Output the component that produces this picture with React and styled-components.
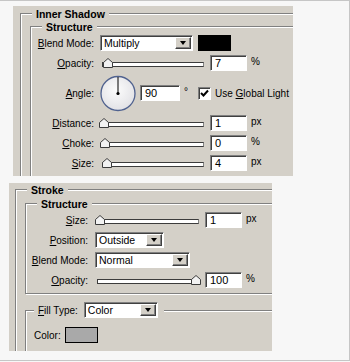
import React from "react";
import styled, { createGlobalStyle } from "styled-components";

const GlobalStyle = createGlobalStyle`
  * { box-sizing: border-box; }
  body {
    margin: 0;
    background: #f7f7f7;
    font-family: "Liberation Sans", Arial, sans-serif;
  }
`;

const Frame = styled.div`
  width: 350px;
  height: 361px;
  background: #f7f7f7;
  border: 1px solid #c6c6c6;
  border-left: none;
  display: flex;
  flex-direction: column;
  gap: 7px;
  padding-top: ${(p) => p.$top}px;
  font-size: 10px;
  color: #000;
`;

const Panel = styled.div`
  width: ${(p) => p.$w}px;
  height: ${(p) => p.$h}px;
  margin-left: ${(p) => p.$x}px;
  padding-top: ${(p) => p.$pt}px;
  padding-left: ${(p) => p.$pl}px;
  background: #d4d0c8;
  overflow: hidden;
  flex-shrink: 0;
`;

// etched frame like a windows group box
const Group = styled.div`
  display: flex;
  flex-direction: column;
  align-items: flex-start;
  width: ${(p) => (p.$wide ? "calc(100% + 20px)" : "100%")};
  margin-top: ${(p) => p.$mt || 0}px;
  padding: 0 0 ${(p) => (p.$pb === undefined ? 12 : p.$pb)}px ${(p) => p.$pl || 0}px;
  border: 1px solid #808080;
  box-shadow: inset 1px 1px 0 #fff, 1px 1px 0 #fff;
  --lw: ${(p) => p.$lw || 60}px;
  --lg: ${(p) => p.$lg || 6}px;
  & > div {
    align-self: stretch;
  }
`;

const Legend = styled.span`
  display: flex;
  align-items: center;
  height: ${(p) => p.$h || 13}px;
  margin-top: ${(p) => p.$mt || -7}px;
  margin-left: ${(p) => p.$ml}px;
  padding: 0 ${(p) => p.$pr || 4}px 0 4px;
  background: #d4d0c8;
  font-weight: ${(p) => (p.$plain ? 400 : 700)};
  font-size: ${(p) => (p.$plain ? 10 : 10.5)}px;
  white-space: nowrap;
`;

const Rows = styled.div`
  display: flex;
  flex-direction: column;
`;

const Row = styled.div`
  display: flex;
  align-items: center;
  height: ${(p) => p.$h || 20}px;
  padding-left: ${(p) => p.$pl || 0}px;
  margin-top: ${(p) => p.$mt || 0}px;
  white-space: nowrap;
`;

const Label = styled.span`
  flex-shrink: 0;
  width: var(--lw);
  margin-right: var(--lg);
  text-align: right;
`;

const Key = styled.span`
  text-decoration: underline;
  text-underline-offset: 1px;
`;

const SelectBox = styled.div`
  display: flex;
  align-items: center;
  flex-shrink: 0;
  width: ${(p) => p.$w}px;
  height: 16px;
  margin-left: ${(p) => p.$ml || 0}px;
  padding: 1px 1px 1px 3px;
  background: #fff;
  border: 1px solid;
  border-color: #808080 #fff #fff #808080;
  box-shadow: inset 1px 1px 0 #404040;
  font-size: 10.5px;
`;

const SelectText = styled.span`
  flex: 1;
  line-height: 12px;
`;

const DropButton = styled.span`
  display: flex;
  align-items: center;
  justify-content: center;
  width: 16px;
  height: 12px;
  background: #d4d0c8;
  border: 1px solid;
  border-color: #fff #404040 #404040 #fff;
  box-shadow: inset -1px -1px 0 #808080;
  &::after {
    content: "";
    border-left: 3.5px solid transparent;
    border-right: 3.5px solid transparent;
    border-top: 4px solid #000;
  }
`;

const NumberBox = styled.span`
  flex-shrink: 0;
  width: ${(p) => p.$w || 37}px;
  height: 16px;
  margin-left: ${(p) => p.$ml || 6}px;
  padding-left: 4px;
  line-height: 14px;
  background: #fff;
  border: 1px solid;
  border-color: #808080 #fff #fff #808080;
  box-shadow: inset 1px 1px 0 #404040;
  font-size: 11px;
`;

const Unit = styled.span`
  margin-left: 4px;
  margin-top: -3px;
`;

const Swatch = styled.span`
  flex-shrink: 0;
  width: 33px;
  height: 16px;
  margin-left: ${(p) => p.$ml || 0}px;
  background: ${(p) => p.$color};
  border: 1px solid #000;
`;

const SliderWrap = styled.div`
  position: relative;
  flex-shrink: 0;
  display: flex;
  align-items: flex-end;
  width: 102px;
  height: 10px;
  margin-left: 2px;
`;

const Track = styled.div`
  width: 100%;
  height: 5px;
  margin-bottom: 1px;
  background: #fff;
  border: 1px solid #3c3c3c;
  border-right-color: #808080;
`;

const ThumbSvg = styled.svg`
  position: absolute;
  bottom: 0;
  left: ${(p) => p.$x}px;
`;

const CheckBox = styled.span`
  display: flex;
  align-items: center;
  justify-content: center;
  flex-shrink: 0;
  width: 13px;
  height: 13px;
  margin-left: 10px;
  background: #fff;
  border: 1px solid;
  border-color: #808080 #fff #fff #808080;
  box-shadow: inset 1px 1px 0 #404040;
`;

const CheckText = styled.span`
  margin-left: 4px;
`;

const Degree = styled.span`
  margin-left: 4px;
  margin-top: -4px;
`;

const Select = ({ w, ml, children }) => (
  <SelectBox $w={w} $ml={ml}>
    <SelectText>{children}</SelectText>
    <DropButton />
  </SelectBox>
);

const Slider = ({ x }) => (
  <SliderWrap>
    <Track />
    <ThumbSvg $x={x} width="10" height="10" viewBox="0 0 10 10">
      <path d="M0.5 9.5 V4.5 L5 0.5 L9.5 4.5 V9.5 Z" fill="#f2f2f2" stroke="#3c3c3c" strokeWidth="1" />
    </ThumbSvg>
  </SliderWrap>
);

const Dial = () => (
  <svg width="36" height="37" viewBox="0 0 36 37" style={{ flexShrink: 0 }}>
    <defs>
      <radialGradient id="dialFill" cx="0.45" cy="0.4" r="0.6">
        <stop offset="0" stopColor="#fcfcfc" />
        <stop offset="1" stopColor="#e2e2e6" />
      </radialGradient>
    </defs>
    <circle cx="18" cy="18.5" r="17" fill="url(#dialFill)" stroke="#50628f" strokeWidth="1.3" />
    <line x1="18" y1="18.5" x2="18" y2="2" stroke="#000" strokeWidth="1" />
    <circle cx="18" cy="18.5" r="1.6" fill="#000" />
  </svg>
);

const SliderRow = ({ k, rest, x, value, unit }) => (
  <Row>
    <Label>
      <Key>{k}</Key>
      {rest}
    </Label>
    <Slider x={x} />
    <NumberBox>{value}</NumberBox>
    <Unit>{unit}</Unit>
  </Row>
);

export default function App() {
  return (
    <>
      <GlobalStyle />
      <Frame $top={5}>
        <Panel $w={280} $h={170} $x={13} $pt={7} $pl={7}>
          <Group $wide $pl={9}>
            <Legend $ml={2}>Inner Shadow</Legend>
            <Group $mt={6} $lw={63} $lg={6}>
              <Legend $ml={11}>Structure</Legend>
              <Rows>
                <Row>
                  <Label>
                    <Key>B</Key>lend Mode:
                  </Label>
                  <Select w={93}>Multiply</Select>
                  <Swatch $color="#000" $ml={5} />
                </Row>
                <SliderRow k="O" rest="pacity:" x={1} value="7" unit="%" />
                <Row $h={40}>
                  <Label>
                    <Key>A</Key>ngle:
                  </Label>
                  <Dial />
                  <NumberBox $w={40} $ml={4}>90</NumberBox>
                  <Degree>°</Degree>
                  <CheckBox>
                    <svg width="9" height="9" viewBox="0 0 9 9">
                      <path d="M1 4 L3.5 6.5 L8 1.5" fill="none" stroke="#000" strokeWidth="2" />
                    </svg>
                  </CheckBox>
                  <CheckText>
                    Use <Key>G</Key>lobal Light
                  </CheckText>
                </Row>
                <SliderRow k="D" rest="istance:" x={-3} value="1" unit="px" />
                <SliderRow k="C" rest="hoke:" x={-2} value="0" unit="%" />
                <SliderRow k="S" rest="ize:" x={0} value="4" unit="px" />
              </Rows>
            </Group>
          </Group>
        </Panel>

        <Panel $w={263} $h={168} $x={9} $pt={6} $pl={6}>
          <Group $wide $pl={9}>
            <Legend $ml={2}>Stroke</Legend>
            <Group $mt={7} $lw={62} $lg={7} $pb={3}>
              <Legend $ml={11}>Structure</Legend>
              <Rows>
                <SliderRow k="S" rest="ize:" x={-2} value="1" unit="px" />
                <Row>
                  <Label>
                    <Key>P</Key>osition:
                  </Label>
                  <Select w={69}>Outside</Select>
                </Row>
                <Row>
                  <Label>
                    <Key>B</Key>lend Mode:
                  </Label>
                  <Select w={95}>Normal</Select>
                </Row>
                <SliderRow k="O" rest="pacity:" x={94} value="100" unit="%" />
              </Rows>
            </Group>
            <Group $mt={16}>
              <Legend $ml={8} $h={16} $mt={-9} $pr={6} $plain>
                <span>
                  <Key>F</Key>ill Type:
                </span>
                <Select w={74} ml={6}>Color</Select>
              </Legend>
              <Row $mt={7} $pl={8}>
                <span>Color:</span>
                <Swatch $color="#a9a9a9" $ml={4} />
              </Row>
            </Group>
          </Group>
        </Panel>
      </Frame>
    </>
  );
}
